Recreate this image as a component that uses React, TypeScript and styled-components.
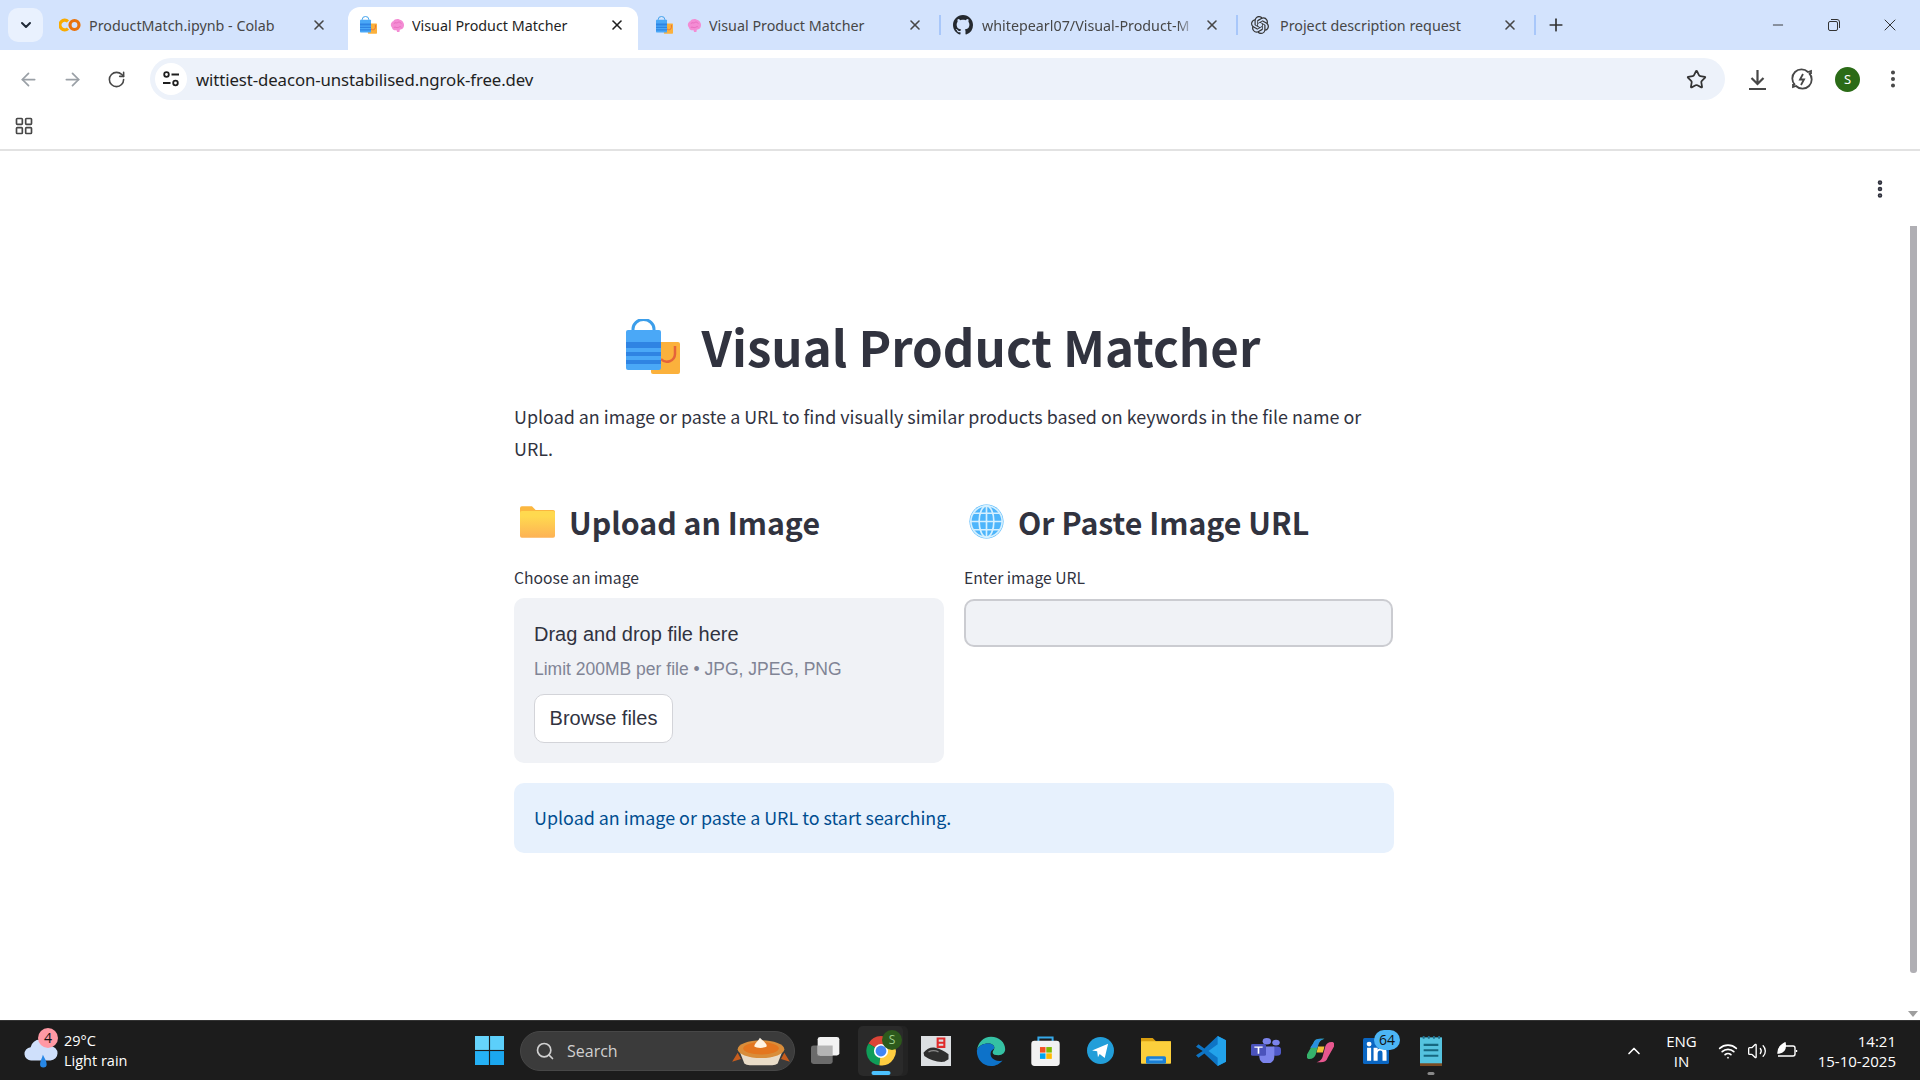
import React from "react";
import styled, { createGlobalStyle } from "styled-components";
import { ArrowLeft, ArrowRight, RotateCw, Star, EllipsisVertical, Plus, X, Minus, Search, ChevronUp, ChevronDown, Volume2, Wifi, LayoutGrid } from "lucide-react";
import { SiOpenai } from "react-icons/si";

const GlobalStyle = createGlobalStyle`
  html, body { margin: 0; padding: 0; height: 100%; overflow: hidden; background: #fff; }
  * { box-sizing: border-box; }
`;

const pageFont = `"Noto Sans CJK JP", "Noto Sans", sans-serif`;
const uiFont = `"Liberation Sans", Arial, sans-serif`;
const chromeFont = `"Noto Sans", "Liberation Sans", sans-serif`;
const sysFont = `"Open Sans", "Noto Sans", sans-serif`;

const Screen = styled.div`
  width: 1920px;
  height: 1080px;
  display: flex;
  flex-direction: column;
  overflow: hidden;
`;

const TabStrip = styled.div`
  height: 50px;
  flex: none;
  background: #d3e3fd;
  display: flex;
  align-items: flex-end;
  padding-left: 8px;
`;

const TabMenu = styled.div`
  width: 35px;
  height: 34px;
  margin: 0 0 8px 0;
  border-radius: 10px;
  background: #e9f1fe;
  display: flex;
  align-items: center;
  justify-content: center;
  color: #1f2937;
`;

const Tab = styled.div<{ $active?: boolean; $w: number; $pl: number; $pr: number; $gap: number }>`
  width: ${(p) => p.$w}px;
  height: 43px;
  flex: none;
  display: flex;
  align-items: center;
  padding: 0 ${(p) => p.$pr}px 7px ${(p) => p.$pl}px;
  gap: ${(p) => p.$gap}px;
  border-radius: 12px 12px 0 0;
  background: ${(p) => (p.$active ? "#fff" : "transparent")};
  color: ${(p) => (p.$active ? "#1f1f1f" : "#474747")};
  font: 14.3px ${chromeFont};
`;

const BagSlot = styled.span`
  display: flex;
  margin-right: 6px;
`;

const TabTitle = styled.span<{ $fade?: boolean }>`
  flex: 1;
  white-space: nowrap;
  overflow: hidden;
  min-width: 0;
  ${(p) => (p.$fade ? "mask-image: linear-gradient(to right, #000 92%, transparent 100%);" : "")}
`;

const TabDivider = styled.div`
  width: 2px;
  height: 20px;
  margin: 0 0 15px;
  background: #a8c7fa;
  flex: none;
`;

const NewTab = styled.div`
  width: 40px;
  height: 43px;
  display: flex;
  align-items: center;
  justify-content: center;
  padding-bottom: 7px;
  color: #333;
`;

const WindowControls = styled.div`
  margin-left: auto;
  height: 50px;
  display: flex;
  align-items: center;
  color: #333;
  padding: 0 2px 0 0;
`;

const WindowButton = styled.div`
  width: 56px;
  height: 50px;
  display: flex;
  align-items: center;
  justify-content: center;
`;

const Toolbar = styled.div`
  height: 58px;
  flex: none;
  background: #fff;
  display: flex;
  align-items: center;
  padding: 0 0 0 6px;
`;

const NavButton = styled.div<{ $dim?: boolean }>`
  width: 44px;
  display: flex;
  justify-content: center;
  color: ${(p) => (p.$dim ? "#9aa0a6" : "#474747")};
`;

const Omnibox = styled.div`
  width: 1575px;
  height: 42px;
  margin: 0 0 0 12px;
  border-radius: 21px;
  background: #edf2fa;
  display: flex;
  align-items: center;
  padding: 0 18px 0 5px;
`;

const SiteInfo = styled.div`
  width: 32px;
  height: 32px;
  border-radius: 50%;
  background: #fff;
  display: flex;
  align-items: center;
  justify-content: center;
  margin-right: 9px;
`;

const Url = styled.span`
  flex: 1;
  font: 16.8px ${chromeFont};
  color: #1f1f1f;
  letter-spacing: -0.1px;
`;

const ToolIcons = styled.div`
  display: flex;
  align-items: center;
  gap: 22px;
  padding-left: 21px;
  color: #474747;
`;

const Avatar = styled.div`
  width: 25px;
  height: 25px;
  border-radius: 50%;
  background: #2b6b17;
  color: #fff;
  font: 13px ${chromeFont};
  display: flex;
  align-items: center;
  justify-content: center;
`;

const BookmarksBar = styled.div`
  height: 43px;
  flex: none;
  padding: 0 0 5px 14px;
  display: flex;
  align-items: center;
  border-bottom: 2px solid #e2e2e2;
  color: #474747;
`;

const Viewport = styled.main`
  flex: 1;
  min-height: 0;
  position: relative;
  display: flex;
  justify-content: center;
  padding: 160px 0 0 0;
  background: #fff;
`;

const PageMenu = styled.div`
  position: absolute;
  top: 27px;
  right: 29px;
  color: #31333f;
`;

const ScrollThumb = styled.div`
  position: absolute;
  top: 75px;
  bottom: 47px;
  right: 3px;
  width: 7px;
  border-radius: 0 0 3px 3px;
  background: #b0afb4;
`;

const ScrollArrow = styled.div`
  position: absolute;
  bottom: 3px;
  right: 2px;
  width: 0;
  height: 0;
  border-left: 5px solid transparent;
  border-right: 5px solid transparent;
  border-top: 6px solid #9e9e9e;
`;

const Column = styled.div`
  width: 880px;
  display: flex;
  flex-direction: column;
  font-family: ${pageFont};
  color: #31333f;
  margin-right: 12px;
`;

const Title = styled.h1`
  margin: 0;
  font: 700 49.2px/70px ${pageFont};
  display: flex;
  align-items: center;
  justify-content: center;
  gap: 22px;
  padding-right: 22px;
`;

const Intro = styled.p`
  margin: 19px 0 0;
  font-size: 17.9px;
  line-height: 32px;
`;

const Columns = styled.div`
  display: grid;
  grid-template-columns: 430px 430px;
  column-gap: 20px;
  margin-top: 29.5px;
`;

const SectionTitle = styled.h2<{ $inset: number }>`
  margin: 0;
  font: 600 30.3px/56px ${pageFont};
  display: flex;
  align-items: center;
  gap: 14px;
  padding-left: ${(p) => p.$inset}px;
`;

const FieldLabel = styled.label`
  display: block;
  margin-top: 16.5px;
  font-size: 15.7px;
  line-height: 24px;
`;

const Dropzone = styled.div`
  margin-top: 8px;
  height: 165px;
  border-radius: 10px;
  background: #f0f2f6;
  padding: 24px 20px 0;
  font-family: ${uiFont};
`;

const DropTitle = styled.div`
  font-size: 20px;
  line-height: 24px;
  color: #31333f;
`;

const DropHint = styled.div`
  margin-top: 12px;
  font-size: 17.5px;
  line-height: 22px;
  color: #808495;
`;

const BrowseButton = styled.button`
  display: block;
  margin-top: 14px;
  width: 139px;
  height: 49px;
  border-radius: 10px;
  border: 1px solid #d3d4d9;
  background: #fff;
  color: #31333f;
  font: 20px ${uiFont};
  padding: 0;
`;

const UrlInput = styled.input`
  display: block;
  margin-top: 9px;
  width: 429px;
  height: 48px;
  border-radius: 10px;
  border: 2px solid #cbccd1;
  background: #f0f2f6;
`;

const InfoBox = styled.div`
  margin-top: 20px;
  height: 70px;
  border-radius: 10px;
  background: #e7f1fd;
  color: #004d90;
  font-size: 17.9px;
  display: flex;
  align-items: center;
  padding: 0 20px 3px;
`;

const Taskbar = styled.footer`
  height: 60px;
  flex: none;
  background: #1c1c1c;
  border-top: 1px solid #333;
  display: grid;
  grid-template-columns: 1fr auto 1fr;
  align-items: center;
  color: #fff;
  font-family: ${sysFont};
`;

const Weather = styled.div`
  display: flex;
  align-items: center;
  gap: 4px;
  padding-left: 24px;
`;

const WeatherIcon = styled.div`
  position: relative;
  width: 36px;
  height: 40px;
`;

const WeatherBadge = styled.div`
  position: absolute;
  top: -3px;
  right: 2px;
  width: 20px;
  height: 20px;
  border-radius: 50%;
  background: #ff99a4;
  color: #111;
  font: 14px/20px ${sysFont};
  text-align: center;
`;

const WeatherText = styled.div`
  font-size: 14.5px;
  line-height: 20px;
`;

const Dock = styled.div`
  display: flex;
  align-items: center;
  height: 59px;
`;

const DockItem = styled.div<{ $active?: boolean }>`
  width: 55px;
  height: 50px;
  flex: none;
  display: flex;
  align-items: center;
  justify-content: center;
  position: relative;
  ${(p) =>
    p.$active
      ? `&::before {
          content: "";
          position: absolute;
          inset: 0 5px;
          border-radius: 5px;
          background: #2a2a2a;
          box-shadow: 5px 0 0 #232323;
        }
        & > svg { position: relative; }`
      : ""}
`;

const Indicator = styled.div<{ $on?: boolean }>`
  position: absolute;
  bottom: 1px;
  left: 50%;
  transform: translateX(-50%);
  width: ${(p) => (p.$on ? 19 : 7)}px;
  height: ${(p) => (p.$on ? 4 : 3)}px;
  border-radius: 2px;
  background: ${(p) => (p.$on ? "#4cc2ff" : "#888")};
`;

const SearchPill = styled.div`
  width: 275px;
  height: 40px;
  border-radius: 20px;
  background: #3b3b3b;
  border: 1px solid #474747;
  display: flex;
  align-items: center;
  padding: 0 3px 0 14px;
  gap: 12px;
  margin: 0 3px;
  font-size: 16px;
  color: #d0d0d0;
`;

const SearchLabel = styled.span`
  flex: 1;
`;

const ProfileBadge = styled.div`
  position: absolute;
  top: 4px;
  left: 29px;
  width: 20px;
  height: 20px;
  border-radius: 50%;
  background: #2d5a1c;
  color: #9fd08d;
  font: 12px/20px ${sysFont};
  text-align: center;
`;

const CountBadge = styled.div`
  position: absolute;
  top: 4px;
  left: 26px;
  width: 26px;
  height: 20px;
  border-radius: 10px;
  background: #4cb5f5;
  color: #111;
  font: 14px/20px ${sysFont};
  text-align: center;
`;

const Tray = styled.div`
  display: flex;
  align-items: center;
  justify-content: flex-end;
  padding-right: 24px;
  font-size: 15px;
`;

const TrayChevron = styled.div`
  margin-right: 22px;
  display: flex;
`;

const Lang = styled.div`
  text-align: center;
  line-height: 20px;
  margin-right: 21px;
`;

const TrayIcons = styled.div`
  display: flex;
  align-items: center;
  gap: 9px;
  margin-right: 20px;
`;

const Clock = styled.div`
  text-align: right;
  line-height: 20px;
`;

const BagIcon = ({ w = 17, h = 18 }: { w?: number; h?: number }) => (
  <svg width={w} height={h} viewBox="0 0 54 55" fill="none">
    <rect x="25" y="23" width="29" height="32" rx="2" fill="#fbb13c" />
    <path d="M49 27v8a8 8 0 0 1-14 5" stroke="#e5633a" strokeWidth="2.500" fill="none" />
    <path d="M7 15V10a10.500 9.500 0 0 1 21 0v5" stroke="#3c9eea" strokeWidth="3" fill="none" />
    <rect x="0" y="11" width="35" height="40" rx="2" fill="#4aa8f7" />
    <path d="M0 23h35v6H0zM0 33h35v4H0zM0 41h35v4H0z" fill="#2f84e3" />
  </svg>
);

const BrainIcon = () => (
  <svg width="15" height="15" viewBox="0 0 16 16">
    <path d="M2 10C0 8 1 4 3.500 3.500 4.500 1 8 .5 10 1.500c3 .5 5 3 5 6 0 3-2 5-4.500 5L10 15H7.500L7 13c-2 .5-4 0-5-3z" fill="#f48cd4" />
    <path d="M4 6c2-2 3 0 4-1s3-1 4 1M4 10c2-1 3 1 5 0s2-1 3 0" stroke="#e86bbd" fill="none" />
  </svg>
);

const ColabIcon = () => (
  <svg width="22" height="14" viewBox="0 0 22 14" fill="none">
    <path d="M9 3.400A4.800 4.800 0 1 0 9 10.600" stroke="#f9ab00" strokeWidth="3.200" />
    <circle cx="15.500" cy="7" r="4.500" stroke="#e8710a" strokeWidth="3.200" />
  </svg>
);

const GithubIcon = () => (
  <svg width="20" height="20" viewBox="0 0 16 16" fill="#24292f">
    <path d="M8 0C3.58 0 0 3.58 0 8c0 3.54 2.29 6.53 5.47 7.59.4.07.55-.17.55-.38 0-.19-.01-.82-.01-1.49-2.01.37-2.53-.49-2.69-.94-.09-.23-.48-.94-.82-1.13-.28-.15-.68-.52-.01-.53.63-.01 1.08.58 1.23.82.72 1.21 1.87.87 2.33.66.07-.52.28-.87.51-1.07-1.78-.2-3.64-.89-3.64-3.95 0-.87.31-1.59.82-2.15-.08-.2-.36-1.02.08-2.12 0 0 .67-.21 2.2.82.64-.18 1.32-.27 2-.27s1.36.09 2 .27c1.53-1.04 2.2-.82 2.2-.82.44 1.1.16 1.92.08 2.12.51.56.82 1.27.82 2.15 0 3.07-1.87 3.75-3.65 3.95.29.25.54.73.54 1.48 0 1.07-.01 1.93-.01 2.2 0 .21.15.46.55.38A8 8 0 0 0 16 8c0-4.42-3.58-8-8-8z" />
  </svg>
);

const SiteInfoIcon = () => (
  <svg width="18" height="18" viewBox="0 0 18 18" fill="none" stroke="#1f1f1f" strokeWidth="1.800">
    <circle cx="4.500" cy="4.500" r="2.300" />
    <path d="M9.500 4.500H17M1 13h7.500" />
    <circle cx="13.500" cy="13" r="2.300" />
  </svg>
);

const DownloadIcon = () => (
  <svg width="23" height="23" viewBox="0 0 23 23" fill="none" stroke="#474747" strokeWidth="2.200">
    <path d="M11.500 2v13M5.500 10l6 6 6-6M3 21h17" />
  </svg>
);

const PerformanceIcon = () => (
  <svg width="22" height="22" viewBox="0 0 22 22" fill="none" stroke="#474747" strokeWidth="1.800">
    <path d="M4 17A8.500 8.500 0 0 1 17 4l3-1v3M18 5a8.500 8.500 0 0 1-13 13l-3 1v-3" />
    <path d="M12 6l-3 5.500h4L10 17" />
  </svg>
);

const FolderEmoji = () => (
  <svg width="35" height="32" viewBox="0 0 38 34">
    <path d="M2 0h11l4 4h19a2 2 0 0 1 2 2v4H0V2a2 2 0 0 1 2-2z" fill="#fbb740" />
    <rect x="0" y="5" width="38" height="29" rx="2" fill="url(#folderFill)" />
    <defs>
      <linearGradient id="folderFill" x1="0" y1="0" x2="0" y2="1">
        <stop offset="0.2" stopColor="#ffd94f" />
        <stop offset="1" stopColor="#fdb255" />
      </linearGradient>
    </defs>
  </svg>
);

const GlobeEmoji = () => (
  <svg width="35" height="35" viewBox="0 0 38 38" fill="none">
    <circle cx="19" cy="19" r="18.500" fill="#4db5fb" />
    <g stroke="#d5f0ff" strokeWidth="1.800">
      <circle cx="19" cy="19" r="17" />
      <ellipse cx="19" cy="19" rx="8" ry="17" />
      <path d="M19 2v34M2 19h34M5 10h28M5 28h28" />
    </g>
  </svg>
);

const CloudIcon = () => (
  <svg width="34" height="40" viewBox="0 0 36 40">
    <path d="M8 30a7 7 0 0 1-1-14 11 11 0 0 1 21-1 7.500 7.500 0 0 1 0 15z" fill="#cfe0fb" />
    <path d="M20 24c2 4 4 7 4 10a3.500 3.500 0 0 1-7 0c0-3 2-6 3-10z" fill="#2787e6" />
  </svg>
);

const WindowsLogo = () => (
  <svg width="29" height="29" viewBox="0 0 30 30">
    <rect width="14.400" height="14.400" fill="#66d4fc" />
    <rect x="15.600" width="14.400" height="14.400" fill="#5ccffb" />
    <rect y="15.600" width="14.400" height="14.400" fill="#25b1f5" />
    <rect x="15.600" y="15.600" width="14.400" height="14.400" fill="#1ba7ef" />
  </svg>
);

const PieIcon = () => (
  <svg width="60" height="32" viewBox="3 0 54 36" preserveAspectRatio="none">
    <path d="M4 30l5-10 3 7zM56 30l-5-10-3 7z" fill="#c75d1e" />
    <path d="M10 16h40l-5 16a6 4 0 0 1-5 2H20a6 4 0 0 1-5-2z" fill="#e9dcc8" />
    <ellipse cx="30" cy="16" rx="21" ry="10" fill="#d98d3a" />
    <ellipse cx="30" cy="15" rx="16" ry="7" fill="#e4761f" />
    <path d="M24 13c0-4 3-5 5-10 3 4 7 7 6 10-2 2-9 2-11 0z" fill="#fff3e2" />
  </svg>
);

const TaskViewIcon = () => (
  <svg width="30" height="27" viewBox="0 0 36 38" preserveAspectRatio="none">
    <rect x="0" y="12" width="26" height="26" rx="3" fill="#6b6b6b" />
    <rect x="8" y="0" width="26" height="26" rx="3" fill="#f2f2f2" />
    <rect x="8" y="12" width="18" height="14" fill="#b4b4b4" />
  </svg>
);

const ChromeIcon = () => (
  <svg width="30" height="30" viewBox="0 0 36 36">
    <path d="M18 18L3 9A17 17 0 0 1 33 9z" fill="#db4437" />
    <path d="M18 18L3 9A17 17 0 0 0 16 35z" fill="#0f9d58" />
    <path d="M18 18L33 9A17 17 0 0 1 16 35z" fill="#ffcd40" />
    <circle cx="18" cy="18" r="8.500" fill="#fff" />
    <circle cx="18" cy="18" r="6.500" fill="#4285f4" />
  </svg>
);

const GameIcon = () => (
  <svg width="30" height="30" viewBox="0 0 36 36">
    <rect width="36" height="36" fill="#dcdfe2" />
    <path d="M3 20c4-5 9-7 14-6 6 1 11 4 16 8v6l-5 3c-8 1-17-2-24-7z" fill="#2e2e2e" />
    <path d="M9 19c4-2 8-2 12 0" stroke="#8a8a8a" strokeWidth="1.500" fill="none" />
    <path d="M20 3h8v10h-8zM20 8h8" fill="none" stroke="#e02b2b" strokeWidth="2.500" />
  </svg>
);

const EdgeIcon = () => (
  <svg width="30" height="30" viewBox="0 0 36 36">
    <path d="M1 18C2 8 9 1 18 1c10 0 17 7 17 15 0 4-3 7-8 7-4 0-7-1-7-3 0-3 2-3 2-6 0-3-3-5-7-5C8 9 2 12 1 18z" fill="#35c1a3" />
    <path d="M1 18c1-6 7-9 14-9 4 0 7 2 7 5 0 2-3 2-4 5-2 5 2 11 10 11 2 0 4-1 4-1-3 4-8 7-14 7C8 36 1 28 1 18z" fill="#0d72c9" />
  </svg>
);

const StoreIcon = () => (
  <svg width="29" height="30" viewBox="0 0 36 38" fill="none">
    <path d="M9 8V2h18v6" stroke="#35a8e8" strokeWidth="2.500" />
    <rect y="6" width="36" height="32" rx="4" fill="#f2f2f2" />
    <rect x="11" y="14" width="7" height="7" fill="#f25022" />
    <rect x="19" y="14" width="7" height="7" fill="#7fba00" />
    <rect x="11" y="22" width="7" height="7" fill="#00a4ef" />
    <rect x="19" y="22" width="7" height="7" fill="#ffb900" />
  </svg>
);

const TelegramIcon = () => (
  <svg width="27" height="27" viewBox="0 0 32 32">
    <circle cx="16" cy="16" r="16" fill="#229ed9" />
    <path d="M6 16l19-8-4 17-6-5-2 4-1-7z" fill="#fff" />
  </svg>
);

const FolderIcon = () => (
  <svg width="30" height="27" viewBox="0 0 36 32">
    <path d="M0 1h14l4 4h18v6H0z" fill="#d99e0f" />
    <rect y="5" width="36" height="27" rx="1" fill="#fccf3c" />
    <rect x="6" y="23" width="24" height="9" rx="2" fill="#1a7fd6" />
    <rect x="10" y="26" width="16" height="2" fill="#7dc3f5" />
  </svg>
);

const VscodeIcon = () => (
  <svg width="30" height="30" viewBox="0 0 36 36">
    <path d="M26 0l10 5v26l-10 5L10 21l-7 5-3-3 8-5-8-5 3-3 7 5z" fill="#0e74c4" />
    <path d="M26 0l10 5v26l-10 5zM26 10L15 18l11 8z" fill="#22a2ea" fillRule="evenodd" />
  </svg>
);

const TeamsIcon = () => (
  <svg width="30" height="25" viewBox="0 0 36 38" preserveAspectRatio="none">
    <circle cx="30" cy="7" r="4.500" fill="#7b83eb" />
    <circle cx="19" cy="5" r="5" fill="#7b83eb" />
    <rect x="24" y="13" width="12" height="14" rx="5" fill="#5059c9" />
    <path d="M10 13h18v16a8 9 0 0 1-18 0z" fill="#7b83eb" />
    <rect y="9" width="18" height="18" rx="2" fill="#4b53bc" />
    <path d="M4 13h10v2h-4v9H8v-9H4z" fill="#fff" />
  </svg>
);

const CopilotIcon = () => (
  <svg width="27" height="25" viewBox="0 0 34 38" preserveAspectRatio="none">
    <path d="M8 8c1-5 4-7 9-7h5c-5 2-7 5-8 10l-3 14c-1 4-4 7-8 7-3 0-4-3-3-7z" fill="#36b26b" />
    <path d="M8 8c1-5 4-7 9-7h5c-5 2-7 5-8 10l-1 4H4z" fill="#2a8fe0" />
    <path d="M26 30c-1 5-4 7-9 7h-5c5-2 7-5 8-10l3-14c1-4 4-7 8-7 3 0 4 3 3 7z" fill="#e8578f" />
    <path d="M14 13l-2 9h8l2-9z" fill="#f2c037" />
  </svg>
);

const LinkedinIcon = () => (
  <svg width="26" height="26" viewBox="0 0 32 32">
    <rect width="32" height="32" rx="2" fill="#0a66c2" />
    <rect x="5" y="12" width="5" height="16" fill="#fff" />
    <circle cx="7.500" cy="7.500" r="3" fill="#fff" />
    <path d="M13 12h5v2.500c1-1.700 3-2.900 6-2.900 4 0 5 2.700 5 6.400v10h-5v-9c0-2-.6-3.500-2.700-3.500S18 17 18 19v9h-5z" fill="#fff" />
  </svg>
);

const NotepadIcon = () => (
  <svg width="22" height="30" viewBox="0 0 30 44" preserveAspectRatio="none">
    <rect y="2" width="30" height="40" fill="#55c3df" />
    <rect y="40" width="30" height="4" fill="#7a4a22" />
    <path d="M5 0v4M12 0v4M19 0v4M26 0v4" stroke="#1e6f8e" strokeWidth="2.500" />
    <path d="M5 13h20M5 21h20M5 29h20" stroke="#16677f" strokeWidth="3" />
  </svg>
);

const LeafBattery = () => (
  <svg width="22" height="18" viewBox="0 0 22 18" fill="none" stroke="#fff" strokeWidth="1.400">
    <path d="M8 4h9a2 2 0 0 1 2 2v6a2 2 0 0 1-2 2H2" />
    <path d="M20.500 8v2" />
    <path d="M2 11c0-5 3-8 7-10 1 5-1 9-6 10z" fill="#fff" />
  </svg>
);

const bagFavicon = (
  <BagSlot key="b">
    <BagIcon />
  </BagSlot>
);

const tabs = [
  { w: 305, pl: 16, pr: 21, gap: 8, title: "ProductMatch.ipynb - Colab", icons: [<ColabIcon key="c" />] },
  { w: 290, pl: 12, pr: 13, gap: 7, title: "Visual Product Matcher", active: true, icons: [bagFavicon, <BrainIcon key="m" />] },
  { w: 301, pl: 18, pr: 16, gap: 7.5, title: "Visual Product Matcher", icons: [bagFavicon, <BrainIcon key="m" />] },
  { w: 295, pl: 12, pr: 16, gap: 9, title: "whitepearl07/Visual-Product-M", fade: true, divider: true, icons: [<GithubIcon key="g" />] },
  { w: 296, pl: 13, pr: 16, gap: 11, title: "Project description request", divider: true, icons: [<SiOpenai key="o" size={18} color="#333" />] },
];

export default function App() {
  return (
    <Screen>
      <GlobalStyle />
      <TabStrip>
        <TabMenu>
          <ChevronDown size={16} strokeWidth={3} />
        </TabMenu>
        {tabs.map((t, i) => (
          <React.Fragment key={i}>
            {t.divider && <TabDivider />}
            <Tab $active={t.active} $w={t.w} $pl={t.pl} $pr={t.pr} $gap={t.gap}>
              {t.icons}
              <TabTitle $fade={t.fade}>{t.title}</TabTitle>
              <X size={16} strokeWidth={2.4} />
            </Tab>
          </React.Fragment>
        ))}
        <TabDivider />
        <NewTab>
          <Plus size={20} strokeWidth={2} />
        </NewTab>
        <WindowControls>
          <WindowButton>
            <Minus size={16} strokeWidth={1.4} />
          </WindowButton>
          <WindowButton>
            <svg width="14" height="14" viewBox="0 0 14 14" fill="none" stroke="#333">
              <rect x="1.500" y="3.500" width="9" height="9" rx="1.500" />
              <path d="M4 1.500h6a2.500 2.500 0 0 1 2.500 2.500v6" />
            </svg>
          </WindowButton>
          <WindowButton>
            <X size={20} strokeWidth={1.2} />
          </WindowButton>
        </WindowControls>
      </TabStrip>
      <Toolbar>
        <NavButton $dim>
          <ArrowLeft size={21} strokeWidth={2} />
        </NavButton>
        <NavButton $dim>
          <ArrowRight size={21} strokeWidth={2} />
        </NavButton>
        <NavButton>
          <RotateCw size={19} strokeWidth={2} />
        </NavButton>
        <Omnibox>
          <SiteInfo>
            <SiteInfoIcon />
          </SiteInfo>
          <Url>wittiest-deacon-unstabilised.ngrok-free.dev</Url>
          <Star size={21} strokeWidth={2} color="#333" />
        </Omnibox>
        <ToolIcons>
          <DownloadIcon />
          <PerformanceIcon />
          <Avatar>S</Avatar>
          <EllipsisVertical size={22} strokeWidth={2.4} />
        </ToolIcons>
      </Toolbar>
      <BookmarksBar>
        <LayoutGrid size={20} strokeWidth={2} />
      </BookmarksBar>
      <Viewport>
        <PageMenu>
          <EllipsisVertical size={22} strokeWidth={3} />
        </PageMenu>
        <ScrollThumb />
        <ScrollArrow />
        <Column>
          <Title>
            <BagIcon w={54} h={55} />
            Visual Product Matcher
          </Title>
          <Intro>Upload an image or paste a URL to find visually similar products based on keywords in the file name or URL.</Intro>
          <Columns>
            <div>
              <SectionTitle $inset={6}>
                <FolderEmoji />
                Upload an Image
              </SectionTitle>
              <FieldLabel>Choose an image</FieldLabel>
              <Dropzone>
                <DropTitle>Drag and drop file here</DropTitle>
                <DropHint>Limit 200MB per file • JPG, JPEG, PNG</DropHint>
                <BrowseButton>Browse files</BrowseButton>
              </Dropzone>
            </div>
            <div>
              <SectionTitle $inset={5}>
                <GlobeEmoji />
                Or Paste Image URL
              </SectionTitle>
              <FieldLabel>Enter image URL</FieldLabel>
              <UrlInput />
            </div>
          </Columns>
          <InfoBox>Upload an image or paste a URL to start searching.</InfoBox>
        </Column>
      </Viewport>
      <Taskbar>
        <Weather>
          <WeatherIcon>
            <CloudIcon />
            <WeatherBadge>4</WeatherBadge>
          </WeatherIcon>
          <WeatherText>
            29°C
            <br />
            Light rain
          </WeatherText>
        </Weather>
        <Dock>
          <DockItem>
            <WindowsLogo />
          </DockItem>
          <SearchPill>
            <Search size={20} strokeWidth={2} />
            <SearchLabel>Search</SearchLabel>
            <PieIcon />
          </SearchPill>
          <DockItem>
            <TaskViewIcon />
          </DockItem>
          <DockItem $active>
            <ChromeIcon />
            <ProfileBadge>S</ProfileBadge>
            <Indicator $on />
          </DockItem>
          <DockItem>
            <GameIcon />
          </DockItem>
          <DockItem>
            <EdgeIcon />
          </DockItem>
          <DockItem>
            <StoreIcon />
          </DockItem>
          <DockItem>
            <TelegramIcon />
          </DockItem>
          <DockItem>
            <FolderIcon />
          </DockItem>
          <DockItem>
            <VscodeIcon />
          </DockItem>
          <DockItem>
            <TeamsIcon />
          </DockItem>
          <DockItem>
            <CopilotIcon />
          </DockItem>
          <DockItem>
            <LinkedinIcon />
            <CountBadge>64</CountBadge>
          </DockItem>
          <DockItem>
            <NotepadIcon />
            <Indicator />
          </DockItem>
        </Dock>
        <Tray>
          <TrayChevron>
            <ChevronUp size={20} strokeWidth={2} />
          </TrayChevron>
          <Lang>
            ENG
            <br />
            IN
          </Lang>
          <TrayIcons>
            <Wifi size={20} strokeWidth={2} />
            <Volume2 size={20} strokeWidth={1.6} />
            <LeafBattery />
          </TrayIcons>
          <Clock>
            14:21
            <br />
            15-10-2025
          </Clock>
        </Tray>
      </Taskbar>
    </Screen>
  );
}
